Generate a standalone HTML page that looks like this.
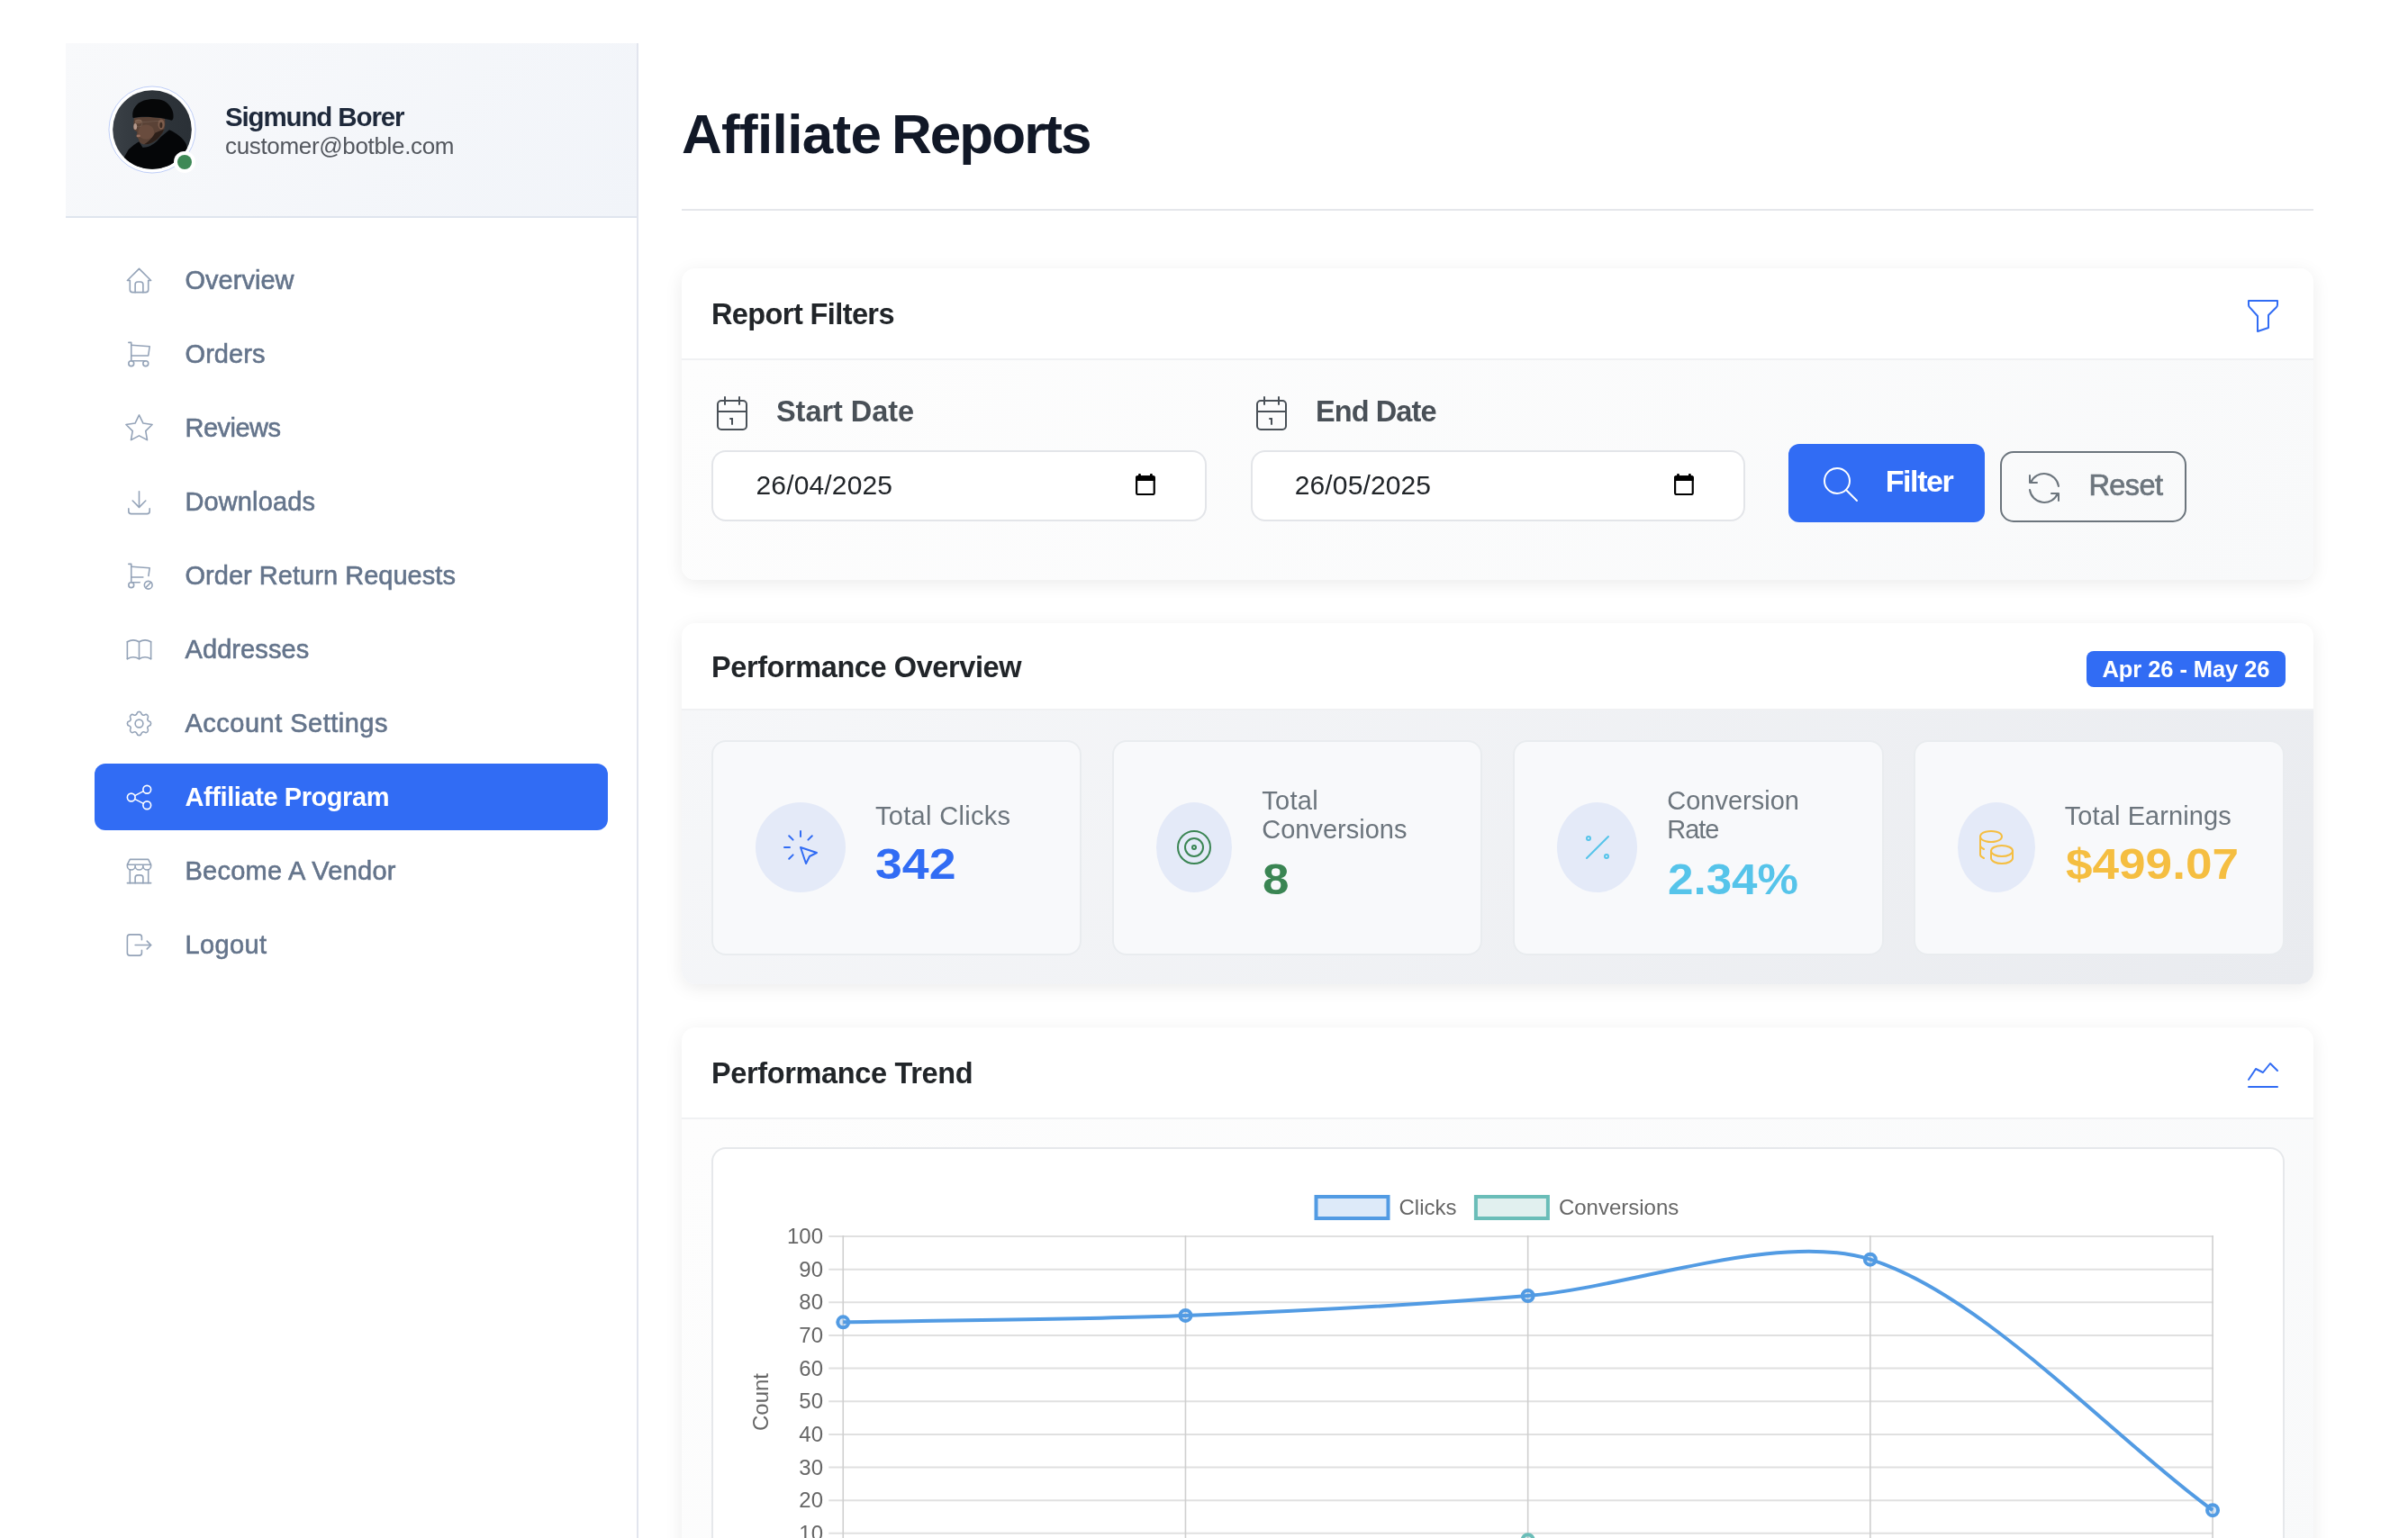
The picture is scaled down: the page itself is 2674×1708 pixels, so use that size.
<!DOCTYPE html>
<html lang="en"><head><meta charset="utf-8"><title>Affiliate Reports</title>
<style>
html,body{margin:0;padding:0;}
body{width:2674px;height:1708px;overflow:hidden;background:#fff;position:relative;font-family:"Liberation Sans", sans-serif;}
body div,body svg,body span,body h1,body h5,body a,body label{position:absolute;display:block;margin:0;padding:0;}
.t{white-space:nowrap;font-family:"Liberation Sans", sans-serif;}
</style></head><body>
<div id="root" style="left:0;top:0;width:2674px;height:1708px;will-change:transform;">
<div style="left:707px;top:48px;width:2px;height:1660px;background:#e2e5ee;"></div>
<div style="left:73px;top:48px;width:634px;height:192px;background:linear-gradient(135deg,#f8f9fb 0%,#f1f4f9 100%);"></div>
<div style="left:73px;top:240px;width:634px;height:2px;background:#dfe5ee;"></div>
<svg style="left:120px;top:95px" width="98" height="98" viewBox="128.2 128.2 1256.4 1256.4">
<defs><clipPath id="av"><circle cx="756.5" cy="756.5" r="562"/></clipPath>
<linearGradient id="avbg" x1="0" y1="0" x2="1" y2="0"><stop offset="0" stop-color="#3b4147"/><stop offset="0.45" stop-color="#2f353b"/><stop offset="1" stop-color="#2a3036"/></linearGradient></defs>
<circle cx="756.5" cy="756.5" r="616" fill="#fff" stroke="#b4c6f6" stroke-width="11"/>
<g clip-path="url(#av)"><g>
<rect x="150" y="150" width="1220" height="1220" fill="url(#avbg)"/>
<path d="M340 1180 L420 1040 C470 990 520 950 570 925 L620 1010 C700 1020 800 960 880 860 L1000 760 C1100 800 1200 880 1240 960 L1340 1340 L280 1340 Z" fill="#050608"/>
<path d="M500 585 C490 640 495 690 486 740 C500 770 530 780 545 792 C535 815 530 840 535 862 C560 880 570 900 572 925 C590 955 640 975 700 960 C780 940 850 880 880 830 C930 780 950 700 935 600 C800 575 650 570 500 585 Z" fill="#5a4236"/>
<path d="M700 960 C780 940 850 880 880 830 C900 810 915 780 925 750 L800 800 C760 860 720 920 640 965 Z" fill="#2c1f19"/>
<ellipse cx="670" cy="790" rx="115" ry="105" fill="#6f5142" opacity="0.7"/>
<ellipse cx="516" cy="712" rx="24" ry="46" fill="#cdb0a4" opacity="0.8"/><ellipse cx="560" cy="640" rx="50" ry="30" fill="#8a6a58" opacity="0.6"/>
<ellipse cx="560" cy="845" rx="28" ry="18" fill="#a87c6c" opacity="0.8"/>
<ellipse cx="885" cy="680" rx="46" ry="72" fill="#7d5d4d"/>
<ellipse cx="882" cy="692" rx="20" ry="40" fill="#3b2a21"/>
<circle cx="565" cy="668" r="50" fill="none" stroke="#a09080" stroke-width="6" opacity="0.55"/>
<path d="M615 650 L860 632" stroke="#a09080" stroke-width="6" opacity="0.5" fill="none"/>
<path d="M478 560 C470 480 520 380 640 340 C720 315 850 310 930 350 C1010 400 1060 480 1058 560 C1060 600 1050 620 1030 625 C960 600 880 585 760 580 C650 570 560 575 490 590 C478 585 476 572 478 560 Z" fill="#060708"/>
</g></g>
</svg>
<div style="left:193.2px;top:168.2px;width:23.4px;height:23.4px;border-radius:50%;background:#fff;"></div>
<div style="left:196.8px;top:171.8px;width:16.2px;height:16.2px;border-radius:50%;background:#3e8956;"></div>
<span id="t_1" class="t" style="left:250px;top:114.75px;font-size:29.5px;line-height:29.5px;font-weight:700;color:#1e293b;letter-spacing:-1.132px;">Sigmund Borer</span>
<span id="t_2" class="t" style="left:250px;top:149.3px;font-size:26px;line-height:26px;font-weight:400;color:#53575e;letter-spacing:-0.333px;">customer@botble.com</span>
<svg style="left:136.8px;top:293.5px;" width="35" height="35" viewBox="0 0 24 24" fill="none" stroke="#94a3b8" stroke-width="1.1" stroke-linecap="round" stroke-linejoin="round"><path d="M5 12l-2 0l9 -9l9 9l-2 0"/><path d="M5 12v7a2 2 0 0 0 2 2h10a2 2 0 0 0 2 -2v-7"/><path d="M9 21v-6a2 2 0 0 1 2 -2h2a2 2 0 0 1 2 2v6"/></svg>
<a id="t_3" class="t" style="left:205.5px;top:296.5px;font-size:29px;line-height:29px;font-weight:400;color:#64748b;letter-spacing:0.020px;-webkit-text-stroke:0.6px #64748b;">Overview</a>
<svg style="left:136.8px;top:375.5px;" width="35" height="35" viewBox="0 0 24 24" fill="none" stroke="#94a3b8" stroke-width="1.1" stroke-linecap="round" stroke-linejoin="round"><path d="M6 19m-2 0a2 2 0 1 0 4 0a2 2 0 1 0 -4 0"/><path d="M17 19m-2 0a2 2 0 1 0 4 0a2 2 0 1 0 -4 0"/><path d="M17 17h-11v-14h-2"/><path d="M6 5l14 1l-1 7h-13"/></svg>
<a id="t_4" class="t" style="left:205.5px;top:378.5px;font-size:29px;line-height:29px;font-weight:400;color:#64748b;letter-spacing:0.072px;-webkit-text-stroke:0.6px #64748b;">Orders</a>
<svg style="left:136.8px;top:457.5px;" width="35" height="35" viewBox="0 0 24 24" fill="none" stroke="#94a3b8" stroke-width="1.1" stroke-linecap="round" stroke-linejoin="round"><path d="M12 17.75l-6.172 3.245l1.179 -6.873l-5 -4.867l6.9 -1l3.086 -6.253l3.086 6.253l6.9 1l-5 4.867l1.179 6.873z"/></svg>
<a id="t_5" class="t" style="left:205.5px;top:460.5px;font-size:29px;line-height:29px;font-weight:400;color:#64748b;letter-spacing:-0.516px;-webkit-text-stroke:0.6px #64748b;">Reviews</a>
<svg style="left:136.8px;top:539.5px;" width="35" height="35" viewBox="0 0 24 24" fill="none" stroke="#94a3b8" stroke-width="1.1" stroke-linecap="round" stroke-linejoin="round"><path d="M4 17v2a2 2 0 0 0 2 2h12a2 2 0 0 0 2 -2v-2"/><path d="M7 11l5 5l5 -5"/><path d="M12 4l0 12"/></svg>
<a id="t_6" class="t" style="left:205.5px;top:542.5px;font-size:29px;line-height:29px;font-weight:400;color:#64748b;letter-spacing:0.114px;-webkit-text-stroke:0.6px #64748b;">Downloads</a>
<svg style="left:136.8px;top:621.5px;" width="35" height="35" viewBox="0 0 24 24" fill="none" stroke="#94a3b8" stroke-width="1.1" stroke-linecap="round" stroke-linejoin="round"><path d="M4 19a2 2 0 1 0 4 0a2 2 0 0 0 -4 0"/><path d="M12.5 17h-6.5v-14h-2"/><path d="M6 5l14 1l-.859 6.011m-4.141 .989h-9"/><path d="M19 19m-3 0a3 3 0 1 0 6 0a3 3 0 1 0 -6 0"/><path d="M17 21l4 -4"/></svg>
<a id="t_7" class="t" style="left:205.5px;top:624.5px;font-size:29px;line-height:29px;font-weight:400;color:#64748b;letter-spacing:0.029px;-webkit-text-stroke:0.6px #64748b;">Order Return Requests</a>
<svg style="left:136.8px;top:703.5px;" width="35" height="35" viewBox="0 0 24 24" fill="none" stroke="#94a3b8" stroke-width="1.1" stroke-linecap="round" stroke-linejoin="round"><path d="M3 19a9 9 0 0 1 9 0a9 9 0 0 1 9 0"/><path d="M3 6a9 9 0 0 1 9 0a9 9 0 0 1 9 0"/><path d="M3 6l0 13"/><path d="M12 6l0 13"/><path d="M21 6l0 13"/></svg>
<a id="t_8" class="t" style="left:205.5px;top:706.5px;font-size:29px;line-height:29px;font-weight:400;color:#64748b;letter-spacing:0.086px;-webkit-text-stroke:0.6px #64748b;">Addresses</a>
<svg style="left:136.8px;top:785.5px;" width="35" height="35" viewBox="0 0 24 24" fill="none" stroke="#94a3b8" stroke-width="1.1" stroke-linecap="round" stroke-linejoin="round"><path d="M10.325 4.317c.426 -1.756 2.924 -1.756 3.35 0a1.724 1.724 0 0 0 2.573 1.066c1.543 -.94 3.31 .826 2.37 2.37a1.724 1.724 0 0 0 1.065 2.572c1.756 .426 1.756 2.924 0 3.35a1.724 1.724 0 0 0 -1.066 2.573c.94 1.543 -.826 3.31 -2.37 2.37a1.724 1.724 0 0 0 -2.572 1.065c-.426 1.756 -2.924 1.756 -3.35 0a1.724 1.724 0 0 0 -2.573 -1.066c-1.543 .94 -3.31 -.826 -2.37 -2.37a1.724 1.724 0 0 0 -1.065 -2.572c-1.756 -.426 -1.756 -2.924 0 -3.35a1.724 1.724 0 0 0 1.066 -2.573c-.94 -1.543 .826 -3.31 2.37 -2.37c1 .608 2.296 .07 2.572 -1.065z"/><path d="M9 12a3 3 0 1 0 6 0a3 3 0 0 0 -6 0"/></svg>
<a id="t_9" class="t" style="left:205.5px;top:788.5px;font-size:29px;line-height:29px;font-weight:400;color:#64748b;letter-spacing:0.491px;-webkit-text-stroke:0.6px #64748b;">Account Settings</a>
<div style="left:105px;top:848px;width:570px;height:74px;background:#316cf4;border-radius:12px;"></div>
<svg style="left:136.8px;top:867.5px;" width="35" height="35" viewBox="0 0 24 24" fill="none" stroke="#fff" stroke-width="1.1" stroke-linecap="round" stroke-linejoin="round"><path d="M6 12m-3 0a3 3 0 1 0 6 0a3 3 0 1 0 -6 0"/><path d="M18 6m-3 0a3 3 0 1 0 6 0a3 3 0 1 0 -6 0"/><path d="M18 18m-3 0a3 3 0 1 0 6 0a3 3 0 1 0 -6 0"/><path d="M8.7 10.7l6.6 -3.4"/><path d="M8.7 13.3l6.6 3.4"/></svg>
<a id="t_10" class="t" style="left:205.5px;top:870.5px;font-size:29px;line-height:29px;font-weight:700;color:#fff;letter-spacing:-0.417px;">Affiliate Program</a>
<svg style="left:136.8px;top:949.5px;" width="35" height="35" viewBox="0 0 24 24" fill="none" stroke="#94a3b8" stroke-width="1.1" stroke-linecap="round" stroke-linejoin="round"><path d="M3 21l18 0"/><path d="M3 7v1a3 3 0 0 0 6 0v-1m0 1a3 3 0 0 0 6 0v-1m0 1a3 3 0 0 0 6 0v-1h-18l2 -4h14l2 4"/><path d="M5 21l0 -10.15"/><path d="M19 21l0 -10.15"/><path d="M9 21v-4a2 2 0 0 1 2 -2h2a2 2 0 0 1 2 2v4"/></svg>
<a id="t_11" class="t" style="left:205.5px;top:952.5px;font-size:29px;line-height:29px;font-weight:400;color:#64748b;letter-spacing:0.246px;-webkit-text-stroke:0.6px #64748b;">Become A Vendor</a>
<svg style="left:136.8px;top:1031.5px;" width="35" height="35" viewBox="0 0 24 24" fill="none" stroke="#94a3b8" stroke-width="1.1" stroke-linecap="round" stroke-linejoin="round"><path d="M14 8v-2a2 2 0 0 0 -2 -2h-7a2 2 0 0 0 -2 2v12a2 2 0 0 0 2 2h7a2 2 0 0 0 2 -2v-2"/><path d="M9 12h12l-3 -3"/><path d="M18 15l3 -3"/></svg>
<a id="t_12" class="t" style="left:205.5px;top:1034.5px;font-size:29px;line-height:29px;font-weight:400;color:#64748b;letter-spacing:0.379px;-webkit-text-stroke:0.6px #64748b;">Logout</a>
<h1 id="t_13" class="t" style="left:757px;top:117.5px;font-size:62px;line-height:62px;font-weight:700;color:#111827;letter-spacing:-0.670px;">Affiliate</h1>
<h1 id="t_14" class="t" style="left:990px;top:117.5px;font-size:62px;line-height:62px;font-weight:700;color:#111827;letter-spacing:-1.961px;">Reports</h1>
<div style="left:757px;top:232px;width:1812px;height:2px;background:#e5e7eb;"></div>
<div style="left:757px;top:298px;width:1812px;height:346px;border-radius:15px;background:#fff;box-shadow:0 4px 20px rgba(0,0,0,.08);overflow:hidden;"><div style="left:0;top:101px;width:1812px;height:245px;background:linear-gradient(135deg,#fdfdfd 0%,#f8f9fa 100%);"></div><div style="left:0;top:100px;width:1812px;height:2px;background:#f0f1f3;"></div></div>
<h5 id="t_15" class="t" style="left:790px;top:332.75px;font-size:32.5px;line-height:32.5px;font-weight:700;color:#212529;letter-spacing:-0.600px;">Report Filters</h5>
<svg style="left:2489px;top:326px;" width="48" height="48" viewBox="0 0 24 24" fill="none" stroke="#316cf4" stroke-width="1" stroke-linecap="round" stroke-linejoin="round"><path d="M4 4h16v2.172a2 2 0 0 1 -.586 1.414l-4.414 4.414v7l-6 2v-8.5l-4.48 -4.928a2 2 0 0 1 -.52 -1.345v-2.227z"/></svg>
<svg style="left:789.25px;top:435px;" width="48" height="48" viewBox="0 0 24 24" fill="none" stroke="#495057" stroke-width="1" stroke-linecap="round" stroke-linejoin="round"><path d="M4 7a2 2 0 0 1 2 -2h12a2 2 0 0 1 2 2v12a2 2 0 0 1 -2 2h-12a2 2 0 0 1 -2 -2v-12z"/><path d="M16 3v4"/><path d="M8 3v4"/><path d="M4 11h16"/><path d="M11 15h1"/><path d="M12 15v3"/></svg>
<label id="t_16" class="t" style="left:862px;top:440.75px;font-size:32.5px;line-height:32.5px;font-weight:700;color:#495057;letter-spacing:-0.059px;">Start Date</label>
<svg style="left:1388.25px;top:435px;" width="48" height="48" viewBox="0 0 24 24" fill="none" stroke="#495057" stroke-width="1" stroke-linecap="round" stroke-linejoin="round"><path d="M4 7a2 2 0 0 1 2 -2h12a2 2 0 0 1 2 2v12a2 2 0 0 1 -2 2h-12a2 2 0 0 1 -2 -2v-12z"/><path d="M16 3v4"/><path d="M8 3v4"/><path d="M4 11h16"/><path d="M11 15h1"/><path d="M12 15v3"/></svg>
<label id="t_17" class="t" style="left:1461px;top:440.75px;font-size:32.5px;line-height:32.5px;font-weight:700;color:#495057;letter-spacing:-0.908px;">End Date</label>
<div style="left:790px;top:500px;width:550px;height:79px;box-sizing:border-box;border:2px solid #e3e5e9;border-radius:16px;background:#fff;"></div>
<div style="left:1389px;top:500px;width:548.5px;height:79px;box-sizing:border-box;border:2px solid #e3e5e9;border-radius:16px;background:#fff;"></div>
<span id="t_18" class="t" style="left:839.5px;top:523.75px;font-size:30px;line-height:30px;font-weight:400;color:#212529;letter-spacing:0.149px;">26/04/2025</span>
<span id="t_19" class="t" style="left:1437.75px;top:523.75px;font-size:30px;line-height:30px;font-weight:400;color:#212529;letter-spacing:0.122px;">26/05/2025</span>
<svg style="left:1261.1px;top:525.8px" width="22" height="24.2" viewBox="0 0 22 24.2"><rect x="1.1" y="3.3" width="19.65" height="19.7" rx="1.6" fill="none" stroke="#000" stroke-width="2.2"/><rect x="0" y="2.2" width="21.85" height="5.7" rx="1.8" fill="#000"/><rect x="0" y="5" width="21.85" height="2.9" fill="#000"/><rect x="3.1" y="0" width="2.8" height="4" rx="1" fill="#000"/><rect x="16" y="0" width="2.8" height="4" rx="1" fill="#000"/></svg>
<svg style="left:1858.6px;top:525.8px" width="22" height="24.2" viewBox="0 0 22 24.2"><rect x="1.1" y="3.3" width="19.65" height="19.7" rx="1.6" fill="none" stroke="#000" stroke-width="2.2"/><rect x="0" y="2.2" width="21.85" height="5.7" rx="1.8" fill="#000"/><rect x="0" y="5" width="21.85" height="2.9" fill="#000"/><rect x="3.1" y="0" width="2.8" height="4" rx="1" fill="#000"/><rect x="16" y="0" width="2.8" height="4" rx="1" fill="#000"/></svg>
<div style="left:1986px;top:492.5px;width:218px;height:87.5px;background:#316cf4;border-radius:12px;"></div>
<svg style="left:2020px;top:514px;" width="48" height="48" viewBox="0 0 24 24" fill="none" stroke="#fff" stroke-width="1" stroke-linecap="round" stroke-linejoin="round"><path d="M10 10m-7 0a7 7 0 1 0 14 0a7 7 0 1 0 -14 0"/><path d="M21 21l-6 -6"/></svg>
<span id="t_20" class="t" style="left:2093.75px;top:517.25px;font-size:34px;line-height:34px;font-weight:700;color:#fff;letter-spacing:-1.425px;">Filter</span>
<div style="left:2221px;top:501px;width:207px;height:78.5px;box-sizing:border-box;border:2px solid #6c757d;border-radius:15px;"></div>
<svg style="left:2246px;top:518px;" width="48" height="48" viewBox="0 0 24 24" fill="none" stroke="#6c757d" stroke-width="1" stroke-linecap="round" stroke-linejoin="round"><path d="M20 11a8.1 8.1 0 0 0 -15.5 -2m-.5 -4v4h4"/><path d="M4 13a8.1 8.1 0 0 0 15.5 2m.5 4v-4h-4"/></svg>
<span id="t_21" class="t" style="left:2319.5px;top:522.75px;font-size:32.5px;line-height:32.5px;font-weight:400;color:#6c757d;letter-spacing:-0.602px;-webkit-text-stroke:0.7px #6c757d;">Reset</span>
<div style="left:757px;top:692px;width:1812px;height:401px;border-radius:15px;background:#fff;box-shadow:0 4px 20px rgba(0,0,0,.08);overflow:hidden;"><div style="left:0;top:96px;width:1812px;height:305px;background:linear-gradient(135deg,#f6f7f9 0%,#e9ebef 100%);"></div><div style="left:0;top:95px;width:1812px;height:2px;background:#f0f1f3;"></div></div>
<h5 id="t_22" class="t" style="left:790px;top:725.25px;font-size:32.5px;line-height:32.5px;font-weight:700;color:#212529;letter-spacing:-0.409px;">Performance Overview</h5>
<div style="left:2317px;top:723px;width:221px;height:40px;background:#316cf4;border-radius:8px;"></div>
<span id="t_23" class="t" style="left:2334.5px;top:730.75px;font-size:25.5px;line-height:25.5px;font-weight:700;color:#fff;letter-spacing:-0.078px;">Apr 26 - May 26</span>
<div style="left:789.5px;top:822px;width:411.5px;height:239px;box-sizing:border-box;border:2px solid #e9ecef;border-radius:16px;background:#f8f9fb;"></div>
<div style="left:839.25px;top:891.25px;width:100px;height:100px;border-radius:50%;background:#e4eaf8;"></div>
<svg style="left:865.25px;top:917.25px;" width="48" height="48" viewBox="0 0 24 24" fill="none" stroke="#316cf4" stroke-width="1" stroke-linecap="round" stroke-linejoin="round"><path d="M3 12l3 0"/><path d="M12 3l0 3"/><path d="M7.8 7.8l-2.2 -2.2"/><path d="M16.2 7.8l2.2 -2.2"/><path d="M7.8 16.2l-2.2 2.2"/><path d="M12 12l9 3l-4 2l-2 4l-3 -9"/></svg>
<div style="left:1234.75px;top:822px;width:411.5px;height:239px;box-sizing:border-box;border:2px solid #e9ecef;border-radius:16px;background:#f8f9fb;"></div>
<div style="left:1284px;top:891.25px;width:84px;height:100px;border-radius:50%;background:#e4eaf8;"></div>
<svg style="left:1302px;top:917.25px;" width="48" height="48" viewBox="0 0 24 24" fill="none" stroke="#3a8553" stroke-width="1" stroke-linecap="round" stroke-linejoin="round"><path d="M12 12m-1 0a1 1 0 1 0 2 0a1 1 0 1 0 -2 0"/><path d="M12 12m-5 0a5 5 0 1 0 10 0a5 5 0 1 0 -10 0"/><path d="M12 12m-9 0a9 9 0 1 0 18 0a9 9 0 1 0 -18 0"/></svg>
<div style="left:1680px;top:822px;width:411.5px;height:239px;box-sizing:border-box;border:2px solid #e9ecef;border-radius:16px;background:#f8f9fb;"></div>
<div style="left:1729px;top:891.25px;width:89px;height:100px;border-radius:50%;background:#e4eaf8;"></div>
<svg style="left:1749.5px;top:917.25px;" width="48" height="48" viewBox="0 0 24 24" fill="none" stroke="#56c4ea" stroke-width="1" stroke-linecap="round" stroke-linejoin="round"><path d="M17 17m-1 0a1 1 0 1 0 2 0a1 1 0 1 0 -2 0"/><path d="M7 7m-1 0a1 1 0 1 0 2 0a1 1 0 1 0 -2 0"/><path d="M6 18l12 -12"/></svg>
<div style="left:2125px;top:822px;width:411.5px;height:239px;box-sizing:border-box;border:2px solid #e9ecef;border-radius:16px;background:#f8f9fb;"></div>
<div style="left:2174px;top:891.25px;width:85.5px;height:100px;border-radius:50%;background:#e4eaf8;"></div>
<svg style="left:2192.75px;top:917.25px;" width="48" height="48" viewBox="0 0 24 24" fill="none" stroke="#f5be41" stroke-width="1" stroke-linecap="round" stroke-linejoin="round"><path d="M9 14c0 1.657 2.686 3 6 3s6 -1.343 6 -3s-2.686 -3 -6 -3s-6 1.343 -6 3z"/><path d="M9 14v4c0 1.656 2.686 3 6 3s6 -1.344 6 -3v-4"/><path d="M3 6c0 1.072 1.144 2.062 3 2.598s4.144 .536 6 0c1.856 -.536 3 -1.526 3 -2.598c0 -1.072 -1.144 -2.062 -3 -2.598s-4.144 -.536 -6 0c-1.856 .536 -3 1.526 -3 2.598z"/><path d="M3 6v10c0 .888 .772 1.45 2 2"/><path d="M3 11c0 .888 .772 1.45 2 2"/></svg>
<span id="t_24" class="t" style="left:972px;top:891.75px;font-size:29px;line-height:29px;font-weight:400;color:#6c757d;letter-spacing:0.304px;">Total Clicks</span>
<span id="t_25" class="t" style="left:972px;top:935.75px;font-size:48px;line-height:48px;font-weight:700;color:#316cf4;transform:scaleX(1.1174);transform-origin:0 50%;">342</span>
<span id="t_26" class="t" style="left:1401.25px;top:874.75px;font-size:29px;line-height:29px;font-weight:400;color:#6c757d;letter-spacing:0.309px;">Total</span>
<span id="t_27" class="t" style="left:1401.25px;top:907.25px;font-size:29px;line-height:29px;font-weight:400;color:#6c757d;letter-spacing:0.006px;">Conversions</span>
<span id="t_28" class="t" style="left:1401.5px;top:952.75px;font-size:48px;line-height:48px;font-weight:700;color:#3a8553;transform:scaleX(1.1047);transform-origin:0 50%;">8</span>
<span id="t_29" class="t" style="left:1851.25px;top:874.75px;font-size:29px;line-height:29px;font-weight:400;color:#6c757d;letter-spacing:0.007px;">Conversion</span>
<span id="t_30" class="t" style="left:1851.25px;top:907.25px;font-size:29px;line-height:29px;font-weight:400;color:#6c757d;letter-spacing:-1.005px;">Rate</span>
<span id="t_31" class="t" style="left:1851.5px;top:952.75px;font-size:48px;line-height:48px;font-weight:700;color:#56c4ea;transform:scaleX(1.0653);transform-origin:0 50%;">2.34%</span>
<span id="t_32" class="t" style="left:2292.75px;top:891.75px;font-size:29px;line-height:29px;font-weight:400;color:#6c757d;letter-spacing:0.094px;">Total Earnings</span>
<span id="t_33" class="t" style="left:2293.5px;top:935.75px;font-size:48px;line-height:48px;font-weight:700;color:#f5be41;transform:scaleX(1.1065);transform-origin:0 50%;">$499.07</span>
<div style="left:757px;top:1141px;width:1812px;height:700px;border-radius:15px;background:#fff;box-shadow:0 4px 20px rgba(0,0,0,.08);overflow:hidden;"><div style="left:0;top:101px;width:1812px;height:599px;background:linear-gradient(135deg,#fdfdfd 0%,#f8f9fa 100%);"></div><div style="left:0;top:100px;width:1812px;height:2px;background:#f0f1f3;"></div></div>
<h5 id="t_34" class="t" style="left:790px;top:1175.75px;font-size:32.5px;line-height:32.5px;font-weight:700;color:#212529;letter-spacing:-0.357px;">Performance Trend</h5>
<svg style="left:2489px;top:1169px;" width="48" height="48" viewBox="0 0 24 24" fill="none" stroke="#316cf4" stroke-width="1" stroke-linecap="round" stroke-linejoin="round"><path d="M4 19l16 0"/><path d="M4 15l4 -6l4 2l4 -5l4 4"/></svg>
<div style="left:790px;top:1274.3px;width:1747px;height:600px;box-sizing:border-box;border:2px solid #e6e8eb;border-radius:16px;background:#fff;"></div>
<svg style="left:0;top:0" width="2674" height="1708" viewBox="0 0 2674 1708"><line x1="920.25" y1="1373.00" x2="2458" y2="1373.00" stroke="#e0e0e0" stroke-width="2"/><line x1="920.25" y1="1409.65" x2="2458" y2="1409.65" stroke="#e0e0e0" stroke-width="2"/><line x1="920.25" y1="1446.30" x2="2458" y2="1446.30" stroke="#e0e0e0" stroke-width="2"/><line x1="920.25" y1="1482.95" x2="2458" y2="1482.95" stroke="#e0e0e0" stroke-width="2"/><line x1="920.25" y1="1519.60" x2="2458" y2="1519.60" stroke="#e0e0e0" stroke-width="2"/><line x1="920.25" y1="1556.25" x2="2458" y2="1556.25" stroke="#e0e0e0" stroke-width="2"/><line x1="920.25" y1="1592.90" x2="2458" y2="1592.90" stroke="#e0e0e0" stroke-width="2"/><line x1="920.25" y1="1629.55" x2="2458" y2="1629.55" stroke="#e0e0e0" stroke-width="2"/><line x1="920.25" y1="1666.20" x2="2458" y2="1666.20" stroke="#e0e0e0" stroke-width="2"/><line x1="920.25" y1="1702.85" x2="2458" y2="1702.85" stroke="#e0e0e0" stroke-width="2"/><line x1="936.25" y1="1372.00" x2="936.25" y2="1720" stroke="#cfcfcf" stroke-width="1.6"/><line x1="1316.45" y1="1372.00" x2="1316.45" y2="1720" stroke="#cfcfcf" stroke-width="1.6"/><line x1="1696.65" y1="1372.00" x2="1696.65" y2="1720" stroke="#cfcfcf" stroke-width="1.6"/><line x1="2076.85" y1="1372.00" x2="2076.85" y2="1720" stroke="#cfcfcf" stroke-width="1.6"/><line x1="2457.05" y1="1372.00" x2="2457.05" y2="1720" stroke="#cfcfcf" stroke-width="1.6"/><path d="M936.25 1750.49 C1050.31 1750.49 1202.71 1756.53 1316.45 1750.49 C1430.83 1744.43 1582.59 1710.18 1696.65 1710.18 C1810.71 1710.18 1962.47 1744.43 2076.85 1750.49 C2190.59 1756.53 2342.99 1750.49 2457.05 1750.49" fill="none" stroke="#6abdb8" stroke-width="4" stroke-linecap="butt"/><circle cx="936.25" cy="1750.49" r="6" fill="#6abdb8" fill-opacity="0.25" stroke="#6abdb8" stroke-width="4"/><circle cx="1316.45" cy="1750.49" r="6" fill="#6abdb8" fill-opacity="0.25" stroke="#6abdb8" stroke-width="4"/><circle cx="1696.65" cy="1710.18" r="6" fill="#6abdb8" fill-opacity="0.25" stroke="#6abdb8" stroke-width="4"/><circle cx="2076.85" cy="1750.49" r="6" fill="#6abdb8" fill-opacity="0.25" stroke="#6abdb8" stroke-width="4"/><circle cx="2457.05" cy="1750.49" r="6" fill="#6abdb8" fill-opacity="0.25" stroke="#6abdb8" stroke-width="4"/><path d="M936.25 1468.29 C1050.31 1466.09 1202.47 1465.35 1316.45 1460.96 C1430.59 1456.56 1582.81 1448.30 1696.65 1438.97 C1810.93 1429.61 1974.68 1366.65 2076.85 1398.65 C2202.80 1438.11 2342.99 1593.63 2457.05 1677.19" fill="none" stroke="#529be3" stroke-width="4" stroke-linecap="butt"/><circle cx="936.25" cy="1468.29" r="6" fill="#529be3" fill-opacity="0.25" stroke="#529be3" stroke-width="4"/><circle cx="1316.45" cy="1460.96" r="6" fill="#529be3" fill-opacity="0.25" stroke="#529be3" stroke-width="4"/><circle cx="1696.65" cy="1438.97" r="6" fill="#529be3" fill-opacity="0.25" stroke="#529be3" stroke-width="4"/><circle cx="2076.85" cy="1398.65" r="6" fill="#529be3" fill-opacity="0.25" stroke="#529be3" stroke-width="4"/><circle cx="2457.05" cy="1677.19" r="6" fill="#529be3" fill-opacity="0.25" stroke="#529be3" stroke-width="4"/><rect x="1461.5" y="1329" width="80" height="24" fill="#ddeaf9" stroke="#529be3" stroke-width="4"/><rect x="1638.9" y="1329" width="80" height="24" fill="#e1f0ef" stroke="#6abdb8" stroke-width="4"/></svg>
<span id="t_35" class="t" style="left:1553.5px;top:1329.1px;font-size:24px;line-height:24px;font-weight:400;color:#666;">Clicks</span>
<span id="t_36" class="t" style="left:1730.9px;top:1329.1px;font-size:24px;line-height:24px;font-weight:400;color:#666;">Conversions</span>
<span id="t_37" class="t" style="right:1760px;top:1361.1px;font-size:24px;line-height:24px;font-weight:400;color:#666;">100</span>
<span id="t_38" class="t" style="right:1760px;top:1397.75px;font-size:24px;line-height:24px;font-weight:400;color:#666;">90</span>
<span id="t_39" class="t" style="right:1760px;top:1434.4px;font-size:24px;line-height:24px;font-weight:400;color:#666;">80</span>
<span id="t_40" class="t" style="right:1760px;top:1471.05px;font-size:24px;line-height:24px;font-weight:400;color:#666;">70</span>
<span id="t_41" class="t" style="right:1760px;top:1507.7px;font-size:24px;line-height:24px;font-weight:400;color:#666;">60</span>
<span id="t_42" class="t" style="right:1760px;top:1544.35px;font-size:24px;line-height:24px;font-weight:400;color:#666;">50</span>
<span id="t_43" class="t" style="right:1760px;top:1581px;font-size:24px;line-height:24px;font-weight:400;color:#666;">40</span>
<span id="t_44" class="t" style="right:1760px;top:1617.65px;font-size:24px;line-height:24px;font-weight:400;color:#666;">30</span>
<span id="t_45" class="t" style="right:1760px;top:1654.3px;font-size:24px;line-height:24px;font-weight:400;color:#666;">20</span>
<span id="t_46" class="t" style="right:1760px;top:1690.95px;font-size:24px;line-height:24px;font-weight:400;color:#666;">10</span>
<span class="t" style="left:844.6px;top:1556.75px;font-size:24px;line-height:24px;color:#666;transform:translate(-50%,-50%) rotate(-90deg);">Count</span>
</div>
</body></html>
